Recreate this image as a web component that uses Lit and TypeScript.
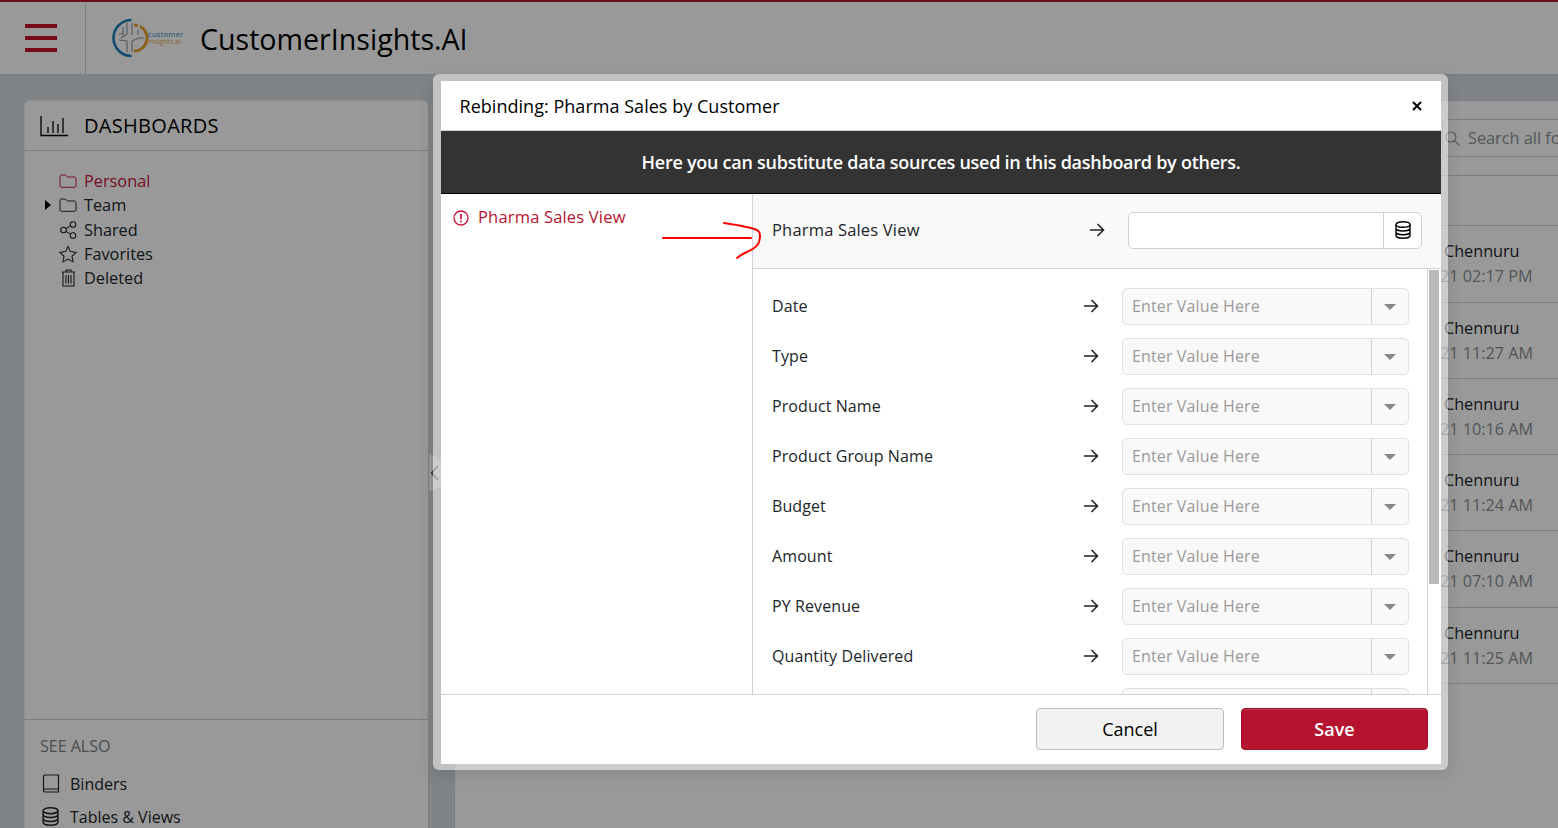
import { LitElement, html, css } from "lit";
import { customElement } from "lit/decorators.js";

const arrow = html`<svg class="arrow" width="16" height="14" viewBox="0 0 16 14" fill="none" stroke="#212529" stroke-width="1.6"><path d="M1 7h13.5M8.500 1l6 6-6 6"/></svg>`;
const dbIcon = (w: number, h: number) => html`<svg width="${w}" height="${h}" viewBox="0 0 16 18" fill="none" stroke="currentColor" stroke-width="1.4"><ellipse cx="8" cy="3.5" rx="7" ry="2.8"/><path d="M1 3.5v11c0 1.500 3 2.800 7 2.800s7-1.300 7-2.800v-11M1 7.200c0 1.500 3 2.800 7 2.800s7-1.300 7-2.800M1 10.900c0 1.500 3 2.800 7 2.800s7-1.300 7-2.800"/></svg>`;
const folder = html`<svg width="18" height="14" viewBox="0 0 18 14" fill="none" stroke="currentColor" stroke-width="1"><path d="M1 12V2.500C1 1.700 1.500 1 2.300 1h4l2 2h7.400c.8 0 1.300.6 1.300 1.400V12c0 .7-.5 1.300-1.300 1.300H2.300C1.500 13.300 1 12.700 1 12z"/></svg>`;
const rows = ["Date", "Type", "Product Name", "Product Group Name", "Budget", "Amount", "PY Revenue", "Quantity Delivered"];
const bg: [string, string, number][] = [
  ["Chennuru", "21 02:17 PM", 77],
  ["Chennuru", "21 11:27 AM", 76],
  ["Chennuru", "21 10:16 AM", 76],
  ["Chennuru", "21 11:24 AM", 76],
  ["Chennuru", "21 07:10 AM", 77],
  ["Chennuru", "21 11:25 AM", 76],
];

@customElement("app-root")
export class AppRoot extends LitElement {
  static styles = css`
    :host { display: block; width: 1558px; height: 828px; overflow: hidden; position: relative; font-family: "Open Sans", "Noto Sans", sans-serif; color: #212529; background: #d5dce1; }
    * { box-sizing: border-box; }
    .page { height: 828px; display: flex; flex-direction: column; }
    .topbar { height: 75px; flex: none; background: #fff; border-top: 2px solid #b5132f; border-bottom: 1px solid #ced4da; display: flex; align-items: center; }
    .burger { width: 86px; height: 72px; border-right: 1px solid #ced4da; display: flex; flex-direction: column; justify-content: center; gap: 8px; padding-left: 25px; }
    .burger i { display: block; width: 32px; height: 4px; background: #c8102e; }
    .logo { margin-left: 26px; width: 74px; height: 40px; flex: none; }
    .brand { margin-left: 14px; font-size: 28.6px; color: #000; }
    .main { flex: 1; display: flex; min-height: 0; padding-left: 24px; }
    .side { width: 405px; flex: none; margin-top: 25px; background: #fff; border: 1px solid #ced4da; border-left-color: #eceff1; border-top-color: #eceff1; border-bottom: 0; border-radius: 6px 6px 0 0; display: flex; flex-direction: column; }
    .side-head { height: 50px; flex: none; border-bottom: 1px solid #ced4da; display: flex; align-items: center; padding-left: 15px; gap: 15px; font-size: 20px; letter-spacing: .3px; color: #000; }
    .tree { flex: 1; padding: 18px 0 0 21px; font-size: 16.3px; line-height: 24.3px; }
    .tree div { display: flex; align-items: center; }
    .tree .car { width: 13px; flex: none; display: flex; }
    .tree .car svg { margin-left: -1px; }
    .tree .ic { width: 18px; margin-right: 7px; display: flex; justify-content: center; }
    .tree .act { color: #c8143c; }
    .also { height: 109px; flex: none; border-top: 1px solid #ced4da; padding: 15px 0 0 15px; font-size: 16px; }
    .also h4 { margin: 0 0 10px; font-weight: 400; font-size: 16px; color: #7a7f85; }
    .also div { display: flex; flex: none; align-items: center; gap: 9px; height: 33px; }
    .also .bi { width: 21px; display: flex; justify-content: center; }
    .content { margin-left: 25px; flex: 1; min-width: 0; background: #fff; border-left: 1px solid #ced4da; display: flex; flex-direction: column; overflow: hidden; }
    .gutter { height: 25px; flex: none; margin-left: -1px; background: #d5dce1; }
    .searchrow { height: 76px; flex: none; border-top: 1px solid #ced4da; border-bottom: 1px solid #ced4da; display: flex; align-items: center; }
    .search { margin-left: 987px; flex: none; width: 200px; height: 38px; border: 1px solid #ced4da; border-right: 0; display: flex; align-items: center; gap: 8px; padding-left: 2px; color: #8a8f94; font-size: 16.3px; white-space: nowrap; border-radius: 6px 0 0 6px; }
    .band { height: 50px; flex: none; border-bottom: 1px solid #ced4da; }
    .item { flex: none; border-bottom: 1px solid #ced4da; padding: 12.5px 0 0 989px; font-size: 16.2px; line-height: 25px; white-space: nowrap; }
    .item span { display: block; color: #8a8f94; margin-left: -4px; }
    .collapse { position: absolute; left: 429px; top: 455px; width: 14px; height: 36px; background: #fff; border-radius: 0 18px 18px 0; }
    .collapse svg { position: absolute; left: 1px; top: 10px; }
    .overlay { position: absolute; inset: 0; background: rgba(0,0,0,.4); }
    .modal { position: absolute; left: 433px; top: 74px; width: 1015px; height: 696px; padding: 7px 7px 6px 8px; background: rgba(255,255,255,.5); border-radius: 6px; box-shadow: 0 4px 16px rgba(0,0,0,.12); }
    .dlg { background: #fff; height: 100%; display: flex; flex-direction: column; }
    .dh { height: 50px; flex: none; border-bottom: 1px solid #ced4da; display: flex; align-items: center; justify-content: space-between; padding: 0 19px 0 18.5px; font-size: 18px; letter-spacing: .03px; color: #000; }
    .dh svg { display: block; }
    .notice { height: 63px; flex: none; background: #333; border-bottom: 1px solid #000; color: #fff; font-weight: 600; font-size: 18px; display: flex; align-items: center; justify-content: center; letter-spacing: -0.26px; }
    .dbody { flex: 1; min-height: 0; display: flex; }
    .left { width: 312px; flex: none; border-right: 1px solid #ced4da; padding: 11px 0 0 12px; color: #b5132f; font-size: 16.5px; letter-spacing: .18px; display: flex; gap: 9px; align-items: flex-start; position: relative; }
    .left svg.al { margin-top: 5px; flex: none; }
    .scribble { position: absolute; left: 220px; top: 26px; overflow: visible; z-index: 2; }
    .right { flex: 1; min-width: 0; display: flex; flex-direction: column; }
    .rtop { height: 75px; flex: none; background: #f9f9f9; border-bottom: 1px solid #ced4da; display: flex; align-items: center; padding: 0 19px 2px; font-size: 16.5px; letter-spacing: .18px; color: #212529; }
    .rtop .lbl { width: 317px; margin-bottom: 2px; }
    .rtop .arrow { margin-right: 23px; }
    .picker { width: 294px; height: 37px; background: #fff; border: 1px solid #ced4da; border-radius: 5px; display: flex; justify-content: flex-end; }
    .picker b { width: 38px; border-left: 1px solid #ced4da; display: flex; align-items: center; justify-content: center; color: #000; }
    .scrollwrap { flex: 1; min-height: 0; display: flex; }
    .list { flex: 1; min-width: 0; overflow: hidden; padding: 19px 0 0 19px; display: flex; flex-direction: column; gap: 13px; }
    .row { flex: none; height: 37px; display: flex; align-items: center; font-size: 16px; letter-spacing: .1px; }
    .row .lbl { width: 311px; margin-bottom: 2px; }
    .row .arrow { margin-right: 23px; margin-bottom: 2px; flex: none; }
    .sel { width: 287px; flex: none; height: 37px; background: #f9f9f9; border: 1px solid #dfe2e5; border-radius: 5px; display: flex; align-items: center; color: #999; padding-left: 9px; letter-spacing: .13px; }
    .sel span { flex: 1; padding-bottom: 2px; }
    .sel b { width: 37px; height: 100%; border-left: 1px solid #ced4da; display: flex; align-items: center; justify-content: center; }
    .sel b i { width: 0; height: 0; border: 6px solid transparent; border-top: 6.5px solid #888; border-bottom: 0; }
    .track { width: 14px; flex: none; border-left: 1px solid #ced4da; padding: 1px 2px 0 0; }
    .thumb { height: 314px; background: #b9b9b9; margin-left: 1px; }
    .foot { height: 70px; flex: none; border-top: 1px solid #ced4da; display: flex; justify-content: flex-end; align-items: center; gap: 17px; padding: 0 13px 2px 0; }
    .btn { height: 42px; border-radius: 4px; font-size: 18px; display: flex; align-items: center; justify-content: center; }
    .cancel { width: 188px; background: #f2f2f2; border: 1px solid #bdbdbd; color: #000; }
    .save { width: 187px; background: #b5132f; border: 1px solid #a01028; box-shadow: inset 0 1px 0 rgba(255,255,255,.15); color: #fff; font-weight: 600; }
  `;

  render() {
    return html`
    <div class="page">
      <div class="topbar">
        <div class="burger"><i></i><i></i><i></i></div>
        <svg class="logo" viewBox="0 0 74 40" fill="none">
          <path d="M19.500 2A18 18 0 0 0 19.500 38" stroke="#1f7fb8" stroke-width="2.600"/>
          <path d="M22 7a13 13 0 0 1 0 26" stroke="#e8a030" stroke-width="3" stroke-dasharray="4 2 40"/>
          <path d="M15 5v11l-6 4M11 9v7M20 5v12M20 34V23l7-3h5M15 34V23l-8-1M7 16h5M26 12v5" stroke="#8a8f94" stroke-width="1.100"/>
          <text x="36" y="19" font-size="7.5" fill="#1f7fb8" font-family="Open Sans" letter-spacing=".3">customer</text>
          <text x="36" y="26" font-size="7" fill="#e8a030" opacity=".8" font-family="Open Sans">insights.ai</text>
        </svg>
        <div class="brand">CustomerInsights.AI</div>
      </div>
      <div class="main">
        <div class="side">
          <div class="side-head">
            <svg width="29" height="22" viewBox="0 0 29 22" fill="none" stroke="#000" stroke-width="1.300"><path d="M1 1v19.500h27M8 18v-6M13 18V6M18 18v-9M23 18V3"/></svg>
            <span>DASHBOARDS</span>
          </div>
          <div class="tree">
            <div class="act"><span class="car"></span><span class="ic">${folder}</span>Personal</div>
            <div><span class="car"><svg width="6" height="10" viewBox="0 0 6 10"><path d="M0 0l6 5-6 5z" fill="#000"/></svg></span><span class="ic">${folder}</span>Team</div>
            <div><span class="car"></span><span class="ic"><svg width="17" height="18" viewBox="0 0 17 18" fill="none" stroke="currentColor" stroke-width="1.100"><circle cx="3.500" cy="9" r="2.800"/><circle cx="13" cy="3.500" r="2.800"/><circle cx="13" cy="14.500" r="2.800"/><path d="M6 7.600l4.500-2.700M6 10.400l4.500 2.700"/></svg></span>Shared</div>
            <div><span class="car"></span><span class="ic"><svg width="19" height="18" viewBox="0 0 19 18" fill="none" stroke="currentColor" stroke-width="1.100"><path d="M9.500 1l2.600 5.500 6 .8-4.400 4.100 1.100 5.900-5.300-2.900-5.300 2.900 1.100-5.900L1 7.300l6-.8z"/></svg></span>Favorites</div>
            <div><span class="car"></span><span class="ic"><svg width="15" height="18" viewBox="0 0 15 18" fill="none" stroke="currentColor" stroke-width="1.100"><path d="M1 3h13M5 3V1h5v2M2 3v14h11V3M5 6v8.500M7.500 6v8.500M10 6v8.500"/></svg></span>Deleted</div>
          </div>
          <div class="also">
            <h4>SEE ALSO</h4>
            <div><span class="bi"><svg width="18" height="19" viewBox="0 0 18 19" fill="none" stroke="currentColor" stroke-width="1.200"><path d="M1.500 15.500V2.500C1.500 1.500 2 1 3 1h13.500v14H3c-1 0-1.500.5-1.500 1.500S2 18 3 18h13.500v-3"/></svg></span>Binders</div>
            <div><span class="bi">${dbIcon(17, 19)}</span>Tables &amp; Views</div>
          </div>
        </div>
        <div class="content">
          <div class="gutter"></div>
          <div class="searchrow"><div class="search"><svg width="15" height="15" viewBox="0 0 15 15" fill="none" stroke="#8a8f94" stroke-width="1.200"><circle cx="6" cy="6" r="5"/><path d="M9.800 9.800l4.700 4.700"/></svg>Search all folders</div></div>
          <div class="band"></div>
          ${bg.map((b) => html`<div class="item" style="height:${b[2]}px">${b[0]}<span>${b[1]}</span></div>`)}
        </div>
      </div>
    </div>
    <div class="collapse"><svg width="9" height="16" viewBox="0 0 9 16" fill="none" stroke="#555" stroke-width="1.500"><path d="M8 1L1.500 8 8 15"/></svg></div>
    <div class="overlay"></div>
    <div class="modal">
      <div class="dlg">
        <div class="dh"><span>Rebinding: Pharma Sales by Customer</span>
          <svg width="10" height="10" viewBox="0 0 10 10" stroke="#000" stroke-width="2"><path d="M1 1l8 8M9 1l-8 8"/></svg></div>
        <div class="notice">Here you can substitute data sources used in this dashboard by others.</div>
        <div class="dbody">
          <div class="left">
            <svg class="al" width="16" height="16" viewBox="0 0 16 16" fill="none" stroke="#c8143c" stroke-width="1.300"><circle cx="8" cy="8" r="7"/><path d="M8 4v5M8 10.500v1.800" stroke-width="1.800"/></svg>
            <span>Pharma Sales View</span>
            <svg class="scribble" width="102" height="42" viewBox="0 0 102 42" fill="none" stroke="#f00" stroke-width="2" stroke-linecap="round"><path d="M2 18h88M63 3c10 1.500 26 4 33 7 3.500 2 3.500 7 2 12-2 6-8 8-12 10-3 1-6 3-10 6"/></svg>
          </div>
          <div class="right">
            <div class="rtop"><span class="lbl">Pharma Sales View</span>${arrow}<div class="picker"><b>${dbIcon(16, 18)}</b></div></div>
            <div class="scrollwrap">
              <div class="list">
                ${rows.map((r) => html`<div class="row"><span class="lbl">${r}</span>${arrow}<div class="sel"><span>Enter Value Here</span><b><i></i></b></div></div>`)}
                <div class="row"><span class="lbl"></span><svg class="arrow" width="16" height="14"></svg><div class="sel"><span></span><b></b></div></div>
              </div>
              <div class="track"><div class="thumb"></div></div>
            </div>
          </div>
        </div>
        <div class="foot"><div class="btn cancel">Cancel</div><div class="btn save">Save</div></div>
      </div>
    </div>`;
  }
}
